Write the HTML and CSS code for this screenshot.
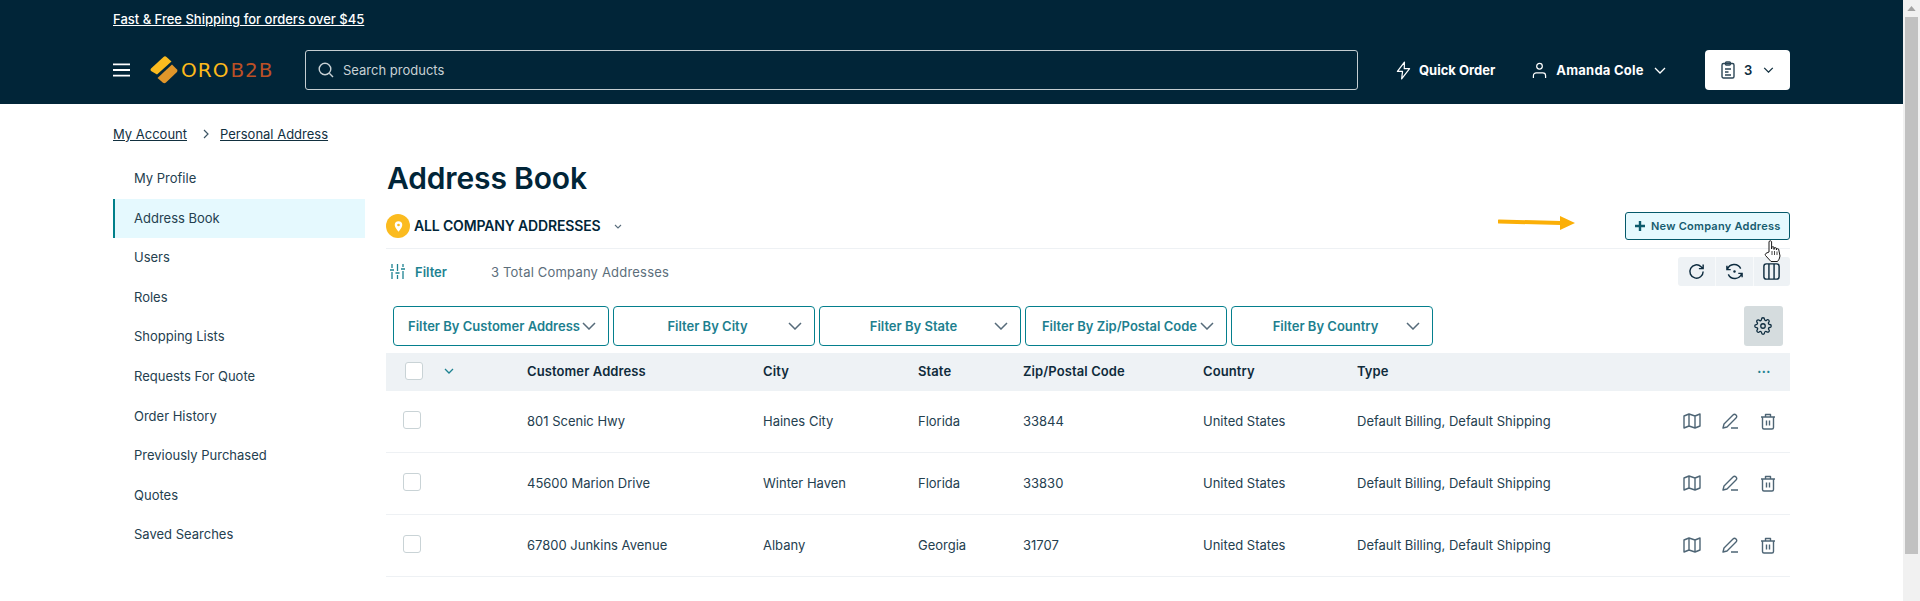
FILE: index.html
```html
<!DOCTYPE html>
<html lang="en">
<head>
<meta charset="utf-8">
<title>Address Book</title>
<link rel="stylesheet" href="styles.css">
</head>
<body>
<div class="page">
  <header class="site-header">
    <div class="promo"><a href="#">Fast &amp; Free Shipping for orders over $45</a></div>
    <div class="nav">
      <svg class="burger" viewBox="0 0 18 14"><path d="M0 1h18M0 7h18M0 13h18"/></svg>
      <div class="logo">
        <svg class="logo-mark" viewBox="0 0 28 28"><path d="M1 12.500 13.500 1q1.500-1.300 3 0l5 4.500L7 18.500 1 15q-1-1.200 0-2.500z" fill="#fbbb1f"/><path d="M7.500 22 22 8.500l5 5q1 1.200 0 2.500L16 26.500q-1.500 1.400-3 .3z" fill="#e0962a"/></svg>
        <span class="logo-a">ORO</span><span class="logo-b">B2B</span>
      </div>
      <div class="search">
        <svg class="search-icon" viewBox="0 0 16 16"><circle cx="7" cy="7" r="5.800"/><path d="m11.300 11.300 3.700 3.700"/></svg>
        <span>Search products</span>
      </div>
      <a class="nav-link quick" href="#">
        <svg class="ico-bolt" viewBox="0 0 16 20"><path d="M9 1 1.500 11H7l-1 8 8.500-11H8.800z"/></svg>
        Quick Order
      </a>
      <a class="nav-link user" href="#">
        <svg class="ico-user" viewBox="0 0 16 18"><circle cx="8" cy="4.500" r="3"/><path d="M1.500 17v-2.500a3 3 0 0 1 3-3h7a3 3 0 0 1 3 3V17"/></svg>
        Amanda Cole
        <svg class="chev-w" viewBox="0 0 12 7"><path d="m1 1 5 5 5-5"/></svg>
      </a>
      <div class="cart">
        <svg class="ico-clip" viewBox="0 0 14 18"><rect x="1" y="2.500" width="12" height="14.500" rx="1.500"/><rect x="4.500" y="1" width="5" height="3" rx="1"/><path d="M4 8h6M4 11h3.500M4 14h6"/></svg>
        <span>3</span>
        <svg class="chev-d" viewBox="0 0 12 7"><path d="m1 1 5 5 5-5"/></svg>
      </div>
    </div>
  </header>

  <nav class="crumbs">
    <a href="#">My Account</a>
    <svg class="crumb-sep" viewBox="0 0 6 10"><path d="m1 1 4 4-4 4"/></svg>
    <a href="#">Personal Address</a>
  </nav>

  <div class="layout">
    <ul class="side">
      <li>My Profile</li>
      <li class="active">Address Book</li>
      <li>Users</li>
      <li>Roles</li>
      <li>Shopping Lists</li>
      <li>Requests For Quote</li>
      <li>Order History</li>
      <li>Previously Purchased</li>
      <li>Quotes</li>
      <li>Saved Searches</li>
    </ul>

    <main class="content">
      <h1>Address Book</h1>
      <div class="title-row">
        <span class="pin"><svg viewBox="0 0 12 14"><path d="M6 0a5 5 0 0 0-5 5c0 3.500 5 9 5 9s5-5.500 5-9a5 5 0 0 0-5-5z" fill="#fff"/><circle cx="6" cy="5" r="1.800" fill="#fbbb1f"/></svg></span>
        <strong>ALL COMPANY ADDRESSES</strong>
        <svg class="chev-s" viewBox="0 0 8 5"><path d="m1 1 3 3 3-3"/></svg>
        <svg class="arrow" viewBox="0 0 78 16"><path d="M1 6.500 63 8" stroke="#fbaf07" stroke-width="4" stroke-linecap="round"/><path d="M62 1l15 7-15 7z" fill="#fbaf07"/></svg>
        <button class="new-btn"><svg viewBox="0 0 10 10"><path d="M5 0v10M0 5h10"/></svg>New Company Address</button>
      </div>

      <div class="tool-row">
        <svg class="ico-filter" viewBox="0 0 15 15"><path d="M2 0v4M0 6h4M2 8v7M7.500 0v7M5.500 9h4M7.500 11v4M13 0v3M11 5h4M13 7v8"/></svg>
        <span class="filter-lbl">Filter</span>
        <span class="total">3 Total Company Addresses</span>
        <div class="tool-group">
          <span><svg viewBox="0 0 20 20"><path d="M17 10a7 7 0 1 1-2.200-5.100L17 7M17 2.500V7h-4.500"/></svg></span>
          <span><svg viewBox="0 0 20 20"><path d="M2 4v4h4M2.500 8a7.500 7.500 0 0 1 14-1M18 16v-4h-4M17.500 12a7.500 7.500 0 0 1-14 1"/><circle cx="10" cy="10" r="1.300" fill="#0e2c3f" stroke="none"/></svg></span>
          <span><svg viewBox="0 0 20 20"><rect x="2" y="2" width="16" height="16" rx="2.500"/><path d="M7.300 2v16M12.700 2v16"/></svg></span>
        </div>
      </div>

      <div class="filter-row">
        <div class="sel sel-wide"><span>Filter By Customer Address</span><svg viewBox="0 0 14 8"><path d="m1 1 6 6 6-6"/></svg></div>
        <div class="sel"><span>Filter By City</span><svg viewBox="0 0 14 8"><path d="m1 1 6 6 6-6"/></svg></div>
        <div class="sel"><span>Filter By State</span><svg viewBox="0 0 14 8"><path d="m1 1 6 6 6-6"/></svg></div>
        <div class="sel"><span>Filter By Zip/Postal Code</span><svg viewBox="0 0 14 8"><path d="m1 1 6 6 6-6"/></svg></div>
        <div class="sel"><span>Filter By Country</span><svg viewBox="0 0 14 8"><path d="m1 1 6 6 6-6"/></svg></div>
        <button class="gear"><svg viewBox="0 0 24 24"><circle cx="12" cy="12" r="3"/><path d="M19.400 15a1.650 1.650 0 0 0 .33 1.820l.06.06a2 2 0 1 1-2.830 2.830l-.06-.06a1.650 1.650 0 0 0-2.800 1.170V21a2 2 0 1 1-4 0v-.09a1.650 1.650 0 0 0-2.800-1.170l-.06.06a2 2 0 1 1-2.830-2.830l.06-.06a1.650 1.650 0 0 0-1.170-2.800H3a2 2 0 1 1 0-4h.09a1.650 1.650 0 0 0 1.170-2.800l-.06-.06a2 2 0 1 1 2.830-2.830l.06.06a1.650 1.650 0 0 0 1.820.33H9a1.650 1.650 0 0 0 1-1.510V3a2 2 0 1 1 4 0v.09a1.650 1.650 0 0 0 2.800 1.170l.06-.06a2 2 0 1 1 2.830 2.830l-.06.06a1.650 1.650 0 0 0-.33 1.820V9a1.650 1.650 0 0 0 1.510 1H21a2 2 0 1 1 0 4h-.09a1.650 1.650 0 0 0-1.510 1z"/></svg></button>
      </div>

      <div class="table">
        <div class="row head">
          <span class="cell-sel"><i class="check check-head"></i><svg class="chev-t" viewBox="0 0 10 6"><path d="m1 1 4 4 4-4"/></svg></span>
          <span>Customer Address</span><span>City</span><span>State</span><span>Zip/Postal Code</span><span>Country</span><span>Type</span>
          <span class="dots">&#8226;&#8226;&#8226;</span>
        </div>
        <div class="row">
          <span class="cell-sel"><i class="check"></i></span>
          <span>801 Scenic Hwy</span><span>Haines City</span><span>Florida</span><span>33844</span><span>United States</span><span>Default Billing, Default Shipping</span>
          <span class="acts">
            <svg class="ic-map" viewBox="0 0 18 16"><path d="M1 3v12l5-2 6 2 5-2V1l-5 2-6-2zM6 1v12M12 3v12"/></svg>
            <svg class="ic-edit" viewBox="0 0 17 16"><path d="M1 15l1-4L11 2q1.500-1.500 3 0t0 3l-9 9zM9 15h7"/></svg>
            <svg class="ic-trash" viewBox="0 0 16 17"><path d="M1 4h14M5.500 4V1.500h5V4M2.500 4v10.500a1.500 1.500 0 0 0 1.500 1.500h8a1.500 1.500 0 0 0 1.500-1.500V4M6.500 7.500v5M9.500 7.500v5"/></svg>
          </span>
        </div>
        <div class="row">
          <span class="cell-sel"><i class="check"></i></span>
          <span>45600 Marion Drive</span><span>Winter Haven</span><span>Florida</span><span>33830</span><span>United States</span><span>Default Billing, Default Shipping</span>
          <span class="acts">
            <svg class="ic-map" viewBox="0 0 18 16"><path d="M1 3v12l5-2 6 2 5-2V1l-5 2-6-2zM6 1v12M12 3v12"/></svg>
            <svg class="ic-edit" viewBox="0 0 17 16"><path d="M1 15l1-4L11 2q1.500-1.500 3 0t0 3l-9 9zM9 15h7"/></svg>
            <svg class="ic-trash" viewBox="0 0 16 17"><path d="M1 4h14M5.500 4V1.500h5V4M2.500 4v10.500a1.500 1.500 0 0 0 1.500 1.500h8a1.500 1.500 0 0 0 1.500-1.500V4M6.500 7.500v5M9.500 7.500v5"/></svg>
          </span>
        </div>
        <div class="row">
          <span class="cell-sel"><i class="check"></i></span>
          <span>67800 Junkins Avenue</span><span>Albany</span><span>Georgia</span><span>31707</span><span>United States</span><span>Default Billing, Default Shipping</span>
          <span class="acts">
            <svg class="ic-map" viewBox="0 0 18 16"><path d="M1 3v12l5-2 6 2 5-2V1l-5 2-6-2zM6 1v12M12 3v12"/></svg>
            <svg class="ic-edit" viewBox="0 0 17 16"><path d="M1 15l1-4L11 2q1.500-1.500 3 0t0 3l-9 9zM9 15h7"/></svg>
            <svg class="ic-trash" viewBox="0 0 16 17"><path d="M1 4h14M5.500 4V1.500h5V4M2.500 4v10.500a1.500 1.500 0 0 0 1.500 1.500h8a1.500 1.500 0 0 0 1.500-1.500V4M6.500 7.500v5M9.500 7.500v5"/></svg>
          </span>
        </div>
      </div>
    </main>
  </div>

  <svg class="hand" viewBox="0 0 18 24"><path d="M5 13V2.500q1.300-1.500 2.600 0V10l.1-1.800q1.200-1 2.300 0v2.300l.1-1.500q1.200-.8 2.200 0l.1 2 .2-1q1.100-.7 2 0L16 17q-.5 3.500-2.500 5.500h-6.500L1.500 16.500q-.8-1.500.5-2.200z" fill="#fff" stroke="#1a1a1a" stroke-width="1" stroke-linejoin="round"/><path d="M8 12v4M10.500 12v4M13 12.500v3.500" stroke="#1a1a1a" stroke-width=".8"/></svg>
</div>
<div class="scrollbar">
  <svg class="scroll-up" viewBox="0 0 10 6"><path d="M5 0l5 6H0z"/></svg>
  <div class="scroll-thumb"></div>
</div>
</body>
</html>
```

FILE: styles.css
```css
* { box-sizing: border-box; }
html, body { margin: 0; height: 601px; overflow: hidden; }
body {
  display: flex;
  font-family: Inter, "Liberation Sans", sans-serif;
  font-size: 13px;
  color: #12303f;
  background: #fff;
}
svg { display: block; flex: none; fill: none; }
a { color: inherit; }

.page { position: relative; flex: 1; min-width: 0; }

/* header */
.site-header { height: 104px; background: #012538; padding: 0 113px; color: #fff; }
.promo { height: 50px; padding-top: 10px; font-size: 13px; line-height: 18px; font-weight: 500; letter-spacing: 0; }
.nav { display: flex; align-items: center; height: 40px; }
.burger { width: 17px; height: 14px; stroke: #fff; stroke-width: 2; }
.logo { display: flex; align-items: center; margin-left: 20px; width: 155px; font-family: "DejaVu Sans", sans-serif; font-size: 20px; letter-spacing: 1px; }
.logo-mark { width: 28px; height: 28px; margin-right: 3px; }
.logo-a { color: #fbb91b; }
.logo-b { color: #bb5026; margin-left: 1px; }
.search { display: flex; align-items: center; width: 1053px; height: 40px; border: 1px solid #c4cdd1; border-radius: 3px; padding-left: 12px; color: #c8d1d5; }
.search-icon { width: 16px; height: 16px; stroke: #c8d1d5; stroke-width: 1.400; margin-right: 9px; }
.nav-link { display: flex; align-items: center; color: #fff; text-decoration: none; font-weight: 700; font-size: 13px; }
.quick { margin-left: 38px; }
.ico-bolt { width: 15px; height: 19px; margin-right: 8px; stroke: #fff; stroke-width: 1.300; stroke-linejoin: round; }
.user { margin-left: 37px; letter-spacing: .25px; }
.ico-user { width: 15px; height: 17px; margin-right: 9px; stroke: #fff; stroke-width: 1.300; }
.chev-w { width: 12px; height: 7px; margin-left: 10px; stroke: #fff; stroke-width: 1.300; }
.cart { display: flex; align-items: center; width: 85px; height: 40px; margin-left: auto; padding-left: 16px; background: #fff; border-radius: 4px; color: #0b2c3e; font-weight: 600; }
.ico-clip { width: 14px; height: 18px; stroke: #2c4656; stroke-width: 1.400; margin-right: 9px; }
.chev-d { width: 11px; height: 6px; margin-left: 11px; stroke: #12303f; stroke-width: 1.500; }

/* breadcrumb */
.crumbs { display: flex; align-items: center; height: 20px; margin: 20px 0 0 113px; }
.crumb-sep { width: 6px; height: 10px; margin: 0 11px 0 16px; stroke: #3d5565; stroke-width: 1.200; }

/* layout */
.layout { display: flex; padding: 0 113px; }
.side { list-style: none; margin: 15px 21px 0 0; padding: 0; width: 252px; flex: none; }
.side li { height: 39.600px; line-height: 39px; padding-left: 21px; color: #24404f; }
.side li.active { background: #e5f9fe; border-left: 2px solid #00808a; padding-left: 19px; }

.content { flex: 1; min-width: 0; }
h1 { margin: 15px 0 0; padding-left: 1px; font-size: 30px; line-height: 38px; font-weight: 600; color: #012538; letter-spacing: -.15px; }
.title-row { display: flex; align-items: center; height: 28px; margin-top: 15px; position: relative; }
.pin { display: flex; align-items: center; justify-content: center; width: 24px; height: 24px; border-radius: 50%; background: #fbbb1f; }
.pin svg { width: 9px; height: 11px; }
.title-row strong { margin: 0 0 1px 4px; font-size: 14px; font-weight: 600; color: #012538; letter-spacing: -.15px; }
.chev-s { width: 8px; height: 5px; margin-left: 14px; stroke: #5a6e7d; stroke-width: 1.100; }
.arrow { position: absolute; left: 1112px; top: 3px; width: 78px; height: 16px; }
.new-btn { display: flex; align-items: center; margin-left: auto; height: 28px; width: 165px; padding: 0 0 0 9px; background: #e5f9fe; border: 1px solid #04596a; border-radius: 3px; color: #175c6f; font: 600 11px Inter, sans-serif; letter-spacing: .25px; }
.new-btn svg { width: 10px; height: 10px; stroke: #0b5a6c; stroke-width: 2.400; margin-right: 6px; }

.tool-row { display: flex; align-items: center; height: 46px; margin-top: 8px; border-top: 1px solid #eef1f4; }
.ico-filter { width: 15px; height: 15px; margin-left: 4px; stroke: #1d8291; stroke-width: 1.300; }
.filter-lbl { margin-left: 10px; font-weight: 600; color: #1d8291; }
.total { margin-left: 44px; color: #5c6e7b; letter-spacing: .2px; }
.tool-group { display: flex; margin-left: auto; height: 29px; background: #eef2f5; border-radius: 3px; }
.tool-group span { display: flex; align-items: center; justify-content: center; width: 37.300px; border-left: 1px solid #f8fafb; }
.tool-group span:first-child { border-left: 0; }
.tool-group svg { width: 19px; height: 19px; stroke: #0e2c3f; stroke-width: 1.500; }

.filter-row { display: flex; gap: 4px; margin: 12px 0 7px 7px; height: 40px; }
.sel { display: flex; align-items: center; width: 202px; border: 1px solid #047f8d; border-radius: 4px; padding: 0 12px 0 13px; font-weight: 600; color: #1d7f8f; white-space: nowrap; }
.sel span { flex: 1; text-align: center; }
.sel svg { width: 14px; height: 8px; stroke: #566b7a; stroke-width: 1.500; }
.sel-wide { width: 216px; padding-left: 12px; }
.gear { display: flex; align-items: center; justify-content: center; width: 39px; height: 40px; margin-left: auto; margin-right: 7px; padding: 0 1px 0 0; border: 0; border-radius: 3px; background: #d5dcde; }
.gear svg { width: 18px; height: 18px; stroke: #0e2c3f; stroke-width: 1.700; }

.row { display: grid; grid-template-columns: 141px 236px 155px 105px 180px 154px 1fr 130px; align-items: center; height: 62px; padding-bottom: 2px; border-bottom: 1px solid #eef1f4; color: #24404f; white-space: nowrap; }
.row.head { height: 38px; background: #eef2f5; border-bottom: 0; font-weight: 600; color: #0f2b3b; letter-spacing: .1px; }
.cell-sel { display: flex; align-items: center; padding-left: 17px; }
.check { display: block; width: 18px; height: 18px; margin-bottom: 2px; background: #fff; border: 1px solid #c9d3d6; border-radius: 3px; }
.check-head { margin: 0 0 0 2px; }
.chev-t { width: 10px; height: 6px; margin-left: 21px; stroke: #1d8291; stroke-width: 1.300; }
.dots { grid-column: 8; justify-self: end; margin-right: 19px; color: #1d8291; font-size: 7px; letter-spacing: 1px; }
.acts { grid-column: 8; display: flex; justify-content: flex-end; align-items: center; padding: 1px 14px 0 0; }
.acts svg { stroke: #4e6575; stroke-width: 1.400; stroke-linejoin: round; }
.ic-map { width: 18px; height: 16px; }
.ic-edit { width: 17px; height: 16px; margin-left: 21px; }
.ic-trash { width: 16px; height: 17px; margin-left: 21px; }

.hand { position: absolute; left: 1764px; top: 239px; width: 18px; height: 24px; }

/* scrollbar */
.scrollbar { position: relative; flex: none; width: 17px; height: 601px; background: #f1f1f1; }
.scroll-up { position: absolute; left: 4px; top: 6px; width: 9px; height: 5px; fill: #a3a3a3; }
.scroll-thumb { position: absolute; left: 2px; right: 2px; top: 17px; height: 537px; background: #c1c1c1; }
```
